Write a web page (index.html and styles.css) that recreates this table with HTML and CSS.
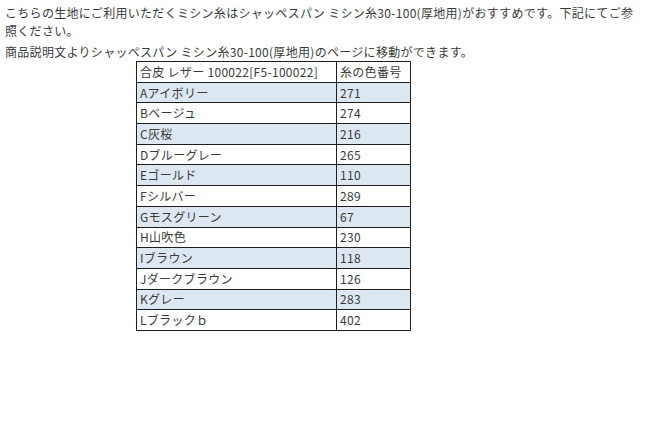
FILE: index.html
```html
<!DOCTYPE html>
<html lang="ja">
<head>
<meta charset="utf-8">
<link rel="stylesheet" href="styles.css">
</head>
<body>
<div class="page">
  <p class="intro">こちらの生地にご利用いただくミシン糸はシャッペスパン ミシン糸30-100(厚地用)がおすすめです。下記にてご参照ください。</p>
  <p class="note">商品説明文よりシャッペスパン ミシン糸30-100(厚地用)のページに移動ができます。</p>
  <table class="colors">
    <tr><td class="name">合皮 レザー 100022[F5-100022]</td><td class="num">糸の色番号</td></tr>
    <tr class="alt"><td>Aアイボリー</td><td>271</td></tr>
    <tr><td>Bベージュ</td><td>274</td></tr>
    <tr class="alt"><td>C灰桜</td><td>216</td></tr>
    <tr><td>Dブルーグレー</td><td>265</td></tr>
    <tr class="alt"><td>Eゴールド</td><td>110</td></tr>
    <tr><td>Fシルバー</td><td>289</td></tr>
    <tr class="alt"><td>Gモスグリーン</td><td>67</td></tr>
    <tr><td>H山吹色</td><td>230</td></tr>
    <tr class="alt"><td>Iブラウン</td><td>118</td></tr>
    <tr><td>Jダークブラウン</td><td>126</td></tr>
    <tr class="alt"><td>Kグレー</td><td>283</td></tr>
    <tr><td>Lブラックｂ</td><td>402</td></tr>
  </table>
</div>
</body>
</html>
```
FILE: styles.css
```css
html, body {
  margin: 0;
  padding: 0;
  background: #ffffff;
}
.page {
  padding: 4px 0 0 5px;
  width: 634px;
  font-family: "Noto Sans CJK JP", "Noto Sans", sans-serif;
  font-size: 12px;
  letter-spacing: 0.3px;
  color: #3a3a3a;
}
.intro {
  margin: 0;
  line-height: 18px;
}
.note {
  margin: 3px 0 0 0;
  line-height: 18px;
}
.colors {
  margin: 0 0 0 131px;
  border-collapse: collapse;
  width: 275px;
  font-size: 12px;
  color: #3a3a3a;
}
.colors td {
  border: 1px solid #1e1e1e;
  height: 19.7px;
  padding: 0 0 0 3px;
  line-height: 16px;
  white-space: nowrap;
}
.colors td.name {
  width: 196px;
}
.colors tr.alt td {
  background: #dde7f2;
}
```
